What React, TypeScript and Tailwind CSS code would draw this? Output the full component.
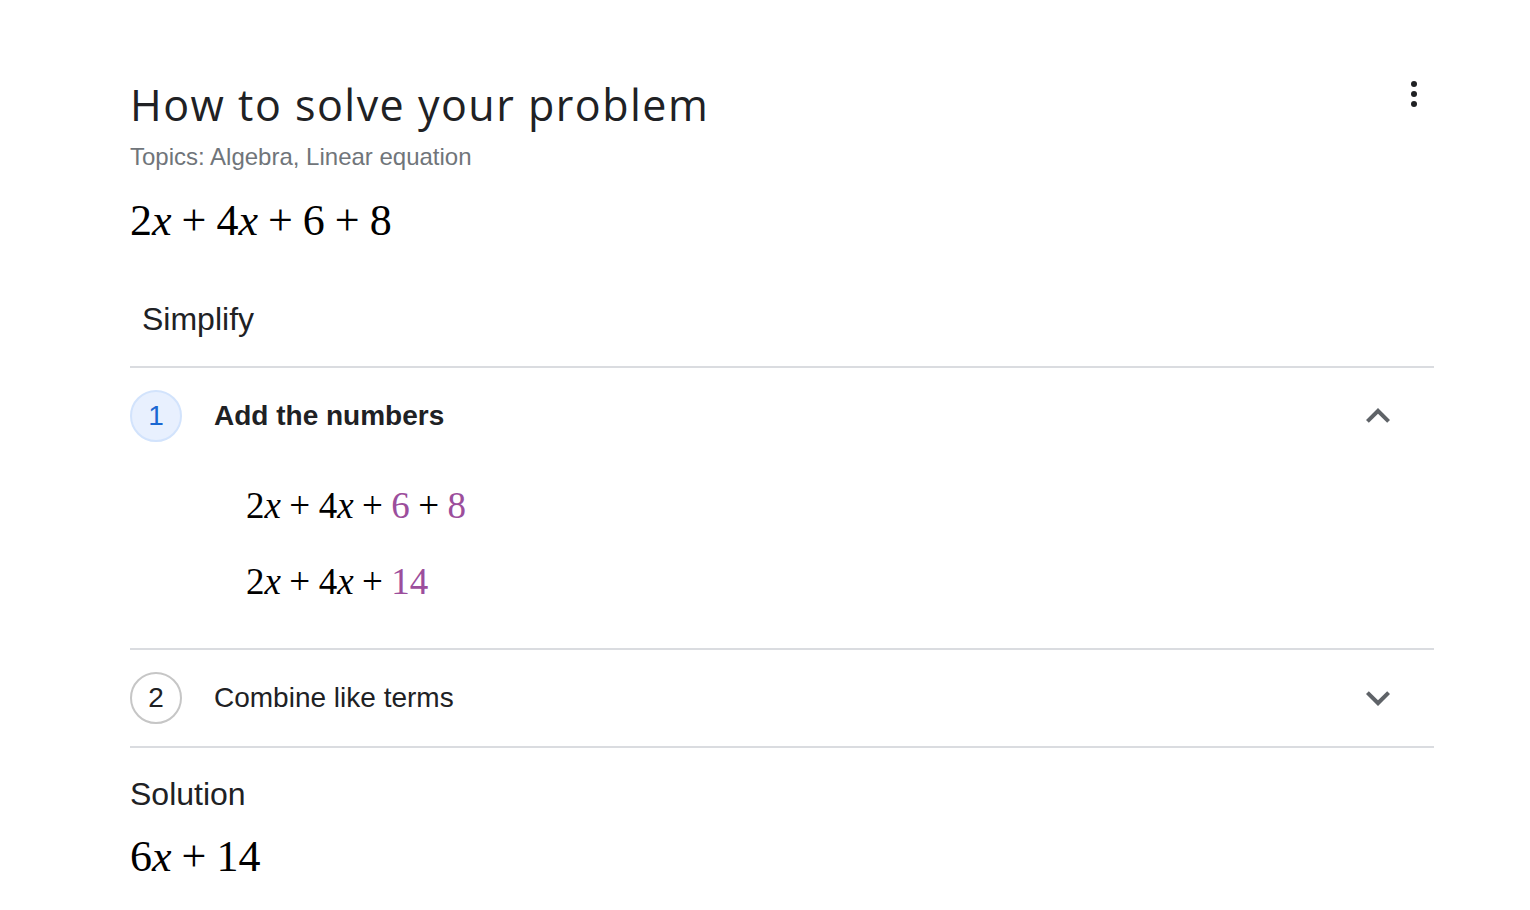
import React from "react";

const serif = { fontFamily: '"Liberation Serif", "Times New Roman", serif' };

function Plus() {
  return <span className="mx-[0.16em] inline-block w-[0.7em] text-center">+</span>;
}

function X() {
  return <i>x</i>;
}

function ChevronUp() {
  return (
    <svg width="48" height="48" viewBox="0 0 24 24" fill="#5f6368">
      <path d="M7.41 15.41 12 10.83l4.59 4.58L18 14l-6-6-6 6z" />
    </svg>
  );
}

function ChevronDown() {
  return (
    <svg width="48" height="48" viewBox="0 0 24 24" fill="#5f6368">
      <path d="M7.41 8.59 12 13.17l4.59-4.58L18 10l-6 6-6-6z" />
    </svg>
  );
}

export default function App() {
  return (
    <div className="min-h-[910px] bg-white text-[#202124]" style={{ fontFamily: '"Liberation Sans", Arial, sans-serif' }}>
      <div className="ml-[130px] w-[1304px] pt-[77px]">
        <div className="flex items-start justify-between">
          <h1
            className="text-[43px] leading-[56px] tracking-[1.5px] text-[#202124]"
            style={{ fontFamily: '"Open Sans", sans-serif' }}
          >
            How to solve your problem
          </h1>
          <div className="mr-[17px] mt-[4px] flex flex-col items-center gap-[4px]">
            <span className="h-[6px] w-[6px] rounded-full bg-[#202124]" />
            <span className="h-[6px] w-[6px] rounded-full bg-[#202124]" />
            <span className="h-[6px] w-[6px] rounded-full bg-[#202124]" />
          </div>
        </div>
        <div className="mt-[10px] text-[24px] leading-[28px] text-[#70757a]">Topics: Algebra, Linear equation</div>
        <div className="mt-[24px] text-[44px] leading-[52px] text-black" style={serif}>
          2<X /><Plus />4<X /><Plus />6<Plus />8
        </div>
        <div className="mt-[52px] pl-[12px] text-[32px] leading-[40px] text-[#202124]">Simplify</div>
        <div className="mt-[27px] h-[2px] bg-[#dadce0]" />

        <div className="flex h-[96px] items-center">
          <div className="flex h-[52px] w-[52px] items-center justify-center rounded-full border-2 border-[#d2e3fc] bg-[#e8f0fe] text-[28px] text-[#1967d2]">
            1
          </div>
          <div className="ml-[32px] text-[28px] font-bold text-[#202124]">Add the numbers</div>
          <div className="ml-auto mr-[32px]">
            <ChevronUp />
          </div>
        </div>
        <div className="pb-[28px] pl-[116px] pt-[4px] text-[37px] leading-[76px] text-black" style={serif}>
          <div>
            2<X /><Plus />4<X /><Plus /><span className="text-[#9c4e9c]">6</span><Plus /><span className="text-[#9c4e9c]">8</span>
          </div>
          <div>
            2<X /><Plus />4<X /><Plus /><span className="text-[#9c4e9c]">14</span>
          </div>
        </div>
        <div className="h-[2px] bg-[#dadce0]" />

        <div className="flex h-[96px] items-center">
          <div className="flex h-[52px] w-[52px] items-center justify-center rounded-full border-2 border-[#c6c6c6] bg-white text-[28px] text-[#202124]">
            2
          </div>
          <div className="ml-[32px] text-[28px] text-[#202124]">Combine like terms</div>
          <div className="ml-auto mr-[32px]">
            <ChevronDown />
          </div>
        </div>
        <div className="h-[2px] bg-[#dadce0]" />

        <div className="mt-[26px] text-[32px] leading-[40px] text-[#202124]">Solution</div>
        <div className="mt-[17px] text-[44px] leading-[52px] text-black" style={serif}>
          6<X /><Plus />14
        </div>
      </div>
    </div>
  );
}
